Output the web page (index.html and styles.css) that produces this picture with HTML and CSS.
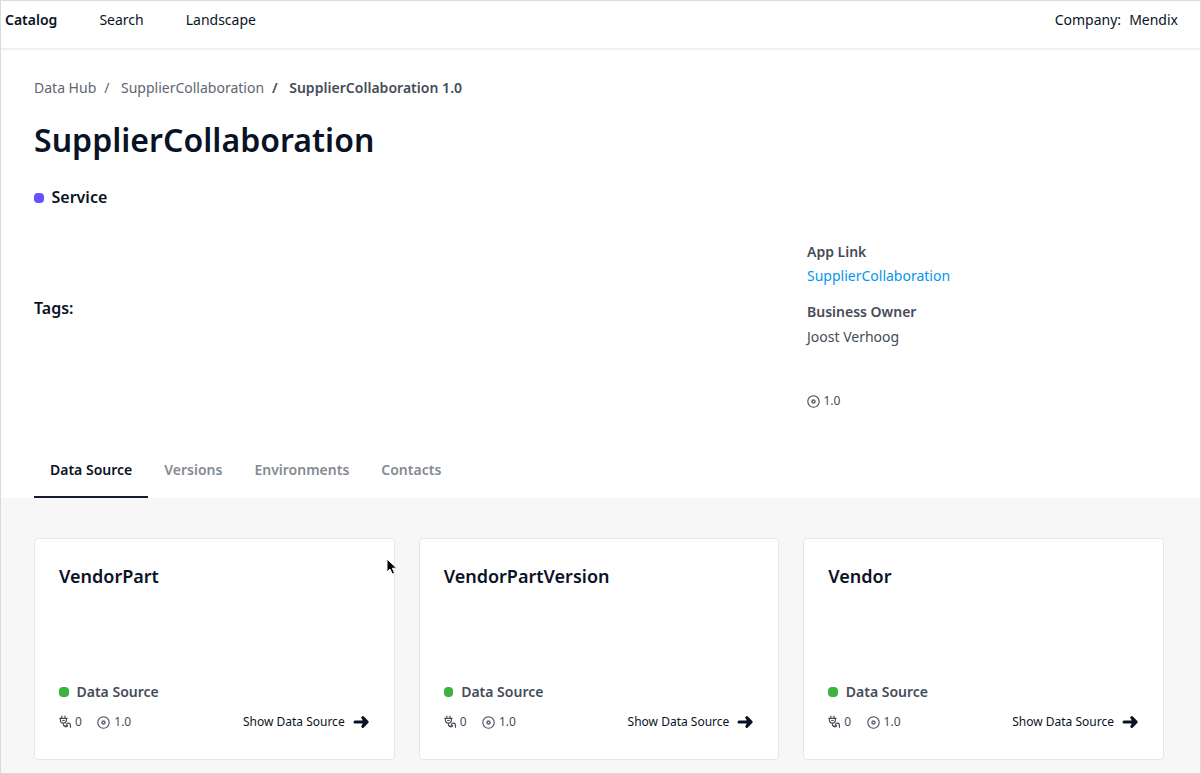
FILE: index.html
```html
<!DOCTYPE html>
<html lang="en">
<head>
<meta charset="utf-8">
<title>SupplierCollaboration 1.0</title>
<link rel="stylesheet" href="styles.css">
</head>
<body>
<svg class="defs" width="0" height="0">
  <symbol id="disc" viewBox="0 0 13 13"><g fill="none" stroke="currentColor"><circle cx="6.5" cy="6.5" r="5.7" stroke-width="1.1"/><circle cx="6.5" cy="6.5" r="1.5" stroke-width="1.6" opacity=".85"/></g></symbol>
  <symbol id="plug" viewBox="0 0 13 14"><g fill="none" stroke="currentColor" stroke-width="1.15" stroke-linecap="round" stroke-linejoin="round"><path d="M2.8 1v2.2M6 1v2.2M.8 3.4h7.3M1.4 3.6v1.6a3 2.9 0 0 0 6 0V3.6M3.6 5.5h1.7M4.4 8.2v1c0 2.9 4 2.1 3.3.2-.6-1.7 3.8-2 3.8 1v1.9"/><path d="M5.3 11.2c1 1 3.2.8 3.4-.6"/></g></symbol>
  <symbol id="arrow" viewBox="0 0 17 14"><path d="M2 7h12M9.8 2.6 14.2 7l-4.4 4.4" fill="none" stroke="currentColor" stroke-width="3" stroke-linecap="round" stroke-linejoin="round"/><path d="M9.5 3.5 14.5 7l-5 3.5z" fill="currentColor"/></symbol>
</svg>
<div class="page">
  <header class="topbar">
    <nav class="nav"><a class="nav-item active">Catalog</a><a class="nav-item">Search</a><a class="nav-item">Landscape</a></nav>
    <div class="company"><span>Company:</span><span>Mendix</span></div>
  </header>
  <main class="details">
    <div class="crumbs"><span>Data Hub</span><span class="sep">/</span><span>SupplierCollaboration</span><b class="sep">/</b><b class="current">SupplierCollaboration 1.0</b></div>
    <h1>SupplierCollaboration</h1>
    <div class="kind"><i class="dot purple"></i>Service</div>
    <div class="info">
      <div class="tags">Tags:</div>
      <div class="meta">
        <b>App Link</b>
        <a class="link">SupplierCollaboration</a>
        <b class="owner">Business Owner</b>
        <span class="person">Joost Verhoog</span>
        <div class="stat version"><svg class="disc"><use href="#disc"/></svg>1.0</div>
      </div>
    </div>
    <div class="tabs"><a class="tab selected">Data Source</a><a class="tab">Versions</a><a class="tab">Environments</a><a class="tab">Contacts</a></div>
  </main>
  <section class="cards">
    <article class="card">
      <h2>VendorPart</h2>
      <div class="type"><i class="dot green"></i>Data Source</div>
      <div class="foot"><span class="stat"><svg class="plug"><use href="#plug"/></svg>0</span><span class="stat"><svg class="disc"><use href="#disc"/></svg>1.0</span><a class="show">Show Data Source<svg class="arrow"><use href="#arrow"/></svg></a></div>
    </article>
    <article class="card">
      <h2>VendorPartVersion</h2>
      <div class="type"><i class="dot green"></i>Data Source</div>
      <div class="foot"><span class="stat"><svg class="plug"><use href="#plug"/></svg>0</span><span class="stat"><svg class="disc"><use href="#disc"/></svg>1.0</span><a class="show">Show Data Source<svg class="arrow"><use href="#arrow"/></svg></a></div>
    </article>
    <article class="card">
      <h2>Vendor</h2>
      <div class="type"><i class="dot green"></i>Data Source</div>
      <div class="foot"><span class="stat"><svg class="plug"><use href="#plug"/></svg>0</span><span class="stat"><svg class="disc"><use href="#disc"/></svg>1.0</span><a class="show">Show Data Source<svg class="arrow"><use href="#arrow"/></svg></a></div>
    </article>
  </section>
  <svg class="cursor" viewBox="0 0 12 18"><path d="M1 1v13l3-3 2.2 5 2.3-1-2.1-4.8h4.3z" fill="#000" stroke="#fff" stroke-width="1"/></svg>
</div>
</body>
</html>
```

FILE: styles.css
```css
* { box-sizing: border-box; }
body { margin: 0; font: 14px/24px "Noto Sans", sans-serif; color: #0a1325; }
.defs { position: absolute; }
.page { position: relative; width: 1201px; height: 774px; border: 1px solid #dadada; background: #fff; overflow: hidden; display: flex; flex-direction: column; }
.topbar { height: 47px; flex: none; display: flex; justify-content: space-between; padding: 7px 22px 0 4px; box-shadow: 0 1px 2px 1px #eee; }
.nav { display: flex; gap: 42px; }
.active { font-weight: 600; }
.company { display: flex; gap: 8px; }
.details { height: 450px; flex: none; padding: 28px 33px 0; display: flex; flex-direction: column; }
.crumbs { display: flex; color: #606671; white-space: pre; }
.crumbs b { color: #454c59; font-weight: 600; }
.crumbs .sep { margin: 0 11.5px 0 8px; }
.crumbs .current { letter-spacing: .03px; }
h1 { margin: 16px 0 0; font-size: 32px; line-height: 48px; font-weight: 600; letter-spacing: .03px; }
.kind { display: flex; align-items: center; margin-top: 21px; font-size: 16px; font-weight: 600; }
.dot { width: 9.5px; height: 10px; border-radius: 4px; margin-right: 8px; }
.kind .dot { margin-top: 1px; }
.purple { background: #6750ff; }
.green { background: #3cb33d; }
.info { display: grid; grid-template-columns: 773px 1fr; height: 205px; margin-top: 30px; }
.tags { margin-top: 57px; font-size: 16px; font-weight: 600; }
.meta { display: flex; flex-direction: column; margin-top: 1px; color: #454c59; }
.meta b { font-weight: 600; }
.link { color: #0595ec; }
.meta .owner { margin-top: 12px; }
.person { margin-top: 1px; }
.stat { display: flex; align-items: center; gap: 4px; font-size: 12px; color: #454c59; }
.version { margin-top: 40px; margin-left: -.5px; }
.disc { width: 13px; height: 13px; }
.plug { width: 13px; height: 14px; margin-right: -1px; }
.tabs { display: flex; margin-top: auto; }
.tab { padding: 1px 16px 0; height: 41px; font-weight: 600; color: #858a93; }
.selected { color: #0a1325; border-bottom: 2px solid #141c30; }
.cards { flex: 1; background: #f7f7f7; padding: 40px 36px 0 33px; display: grid; grid-template-columns: repeat(3, 1fr); gap: 24px; align-items: start; }
.card { height: 222px; border: 1px solid #e7e7e8; border-radius: 4px; background: #fff; padding: 24px 24px 0; display: flex; flex-direction: column; }
h2 { margin: 0; font-size: 18px; line-height: 26px; font-weight: 600; }
.type { margin-top: 91px; display: flex; align-items: center; color: #454c59; font-weight: 600; }
.foot { display: flex; align-items: center; gap: 15.4px; margin-top: 6px; }
.show { margin-left: auto; display: flex; align-items: center; gap: 8px; font-size: 12px; }
.arrow { width: 17px; height: 14px; }
.cursor { position: absolute; left: 385px; top: 557px; width: 12px; height: 18px; }
```
